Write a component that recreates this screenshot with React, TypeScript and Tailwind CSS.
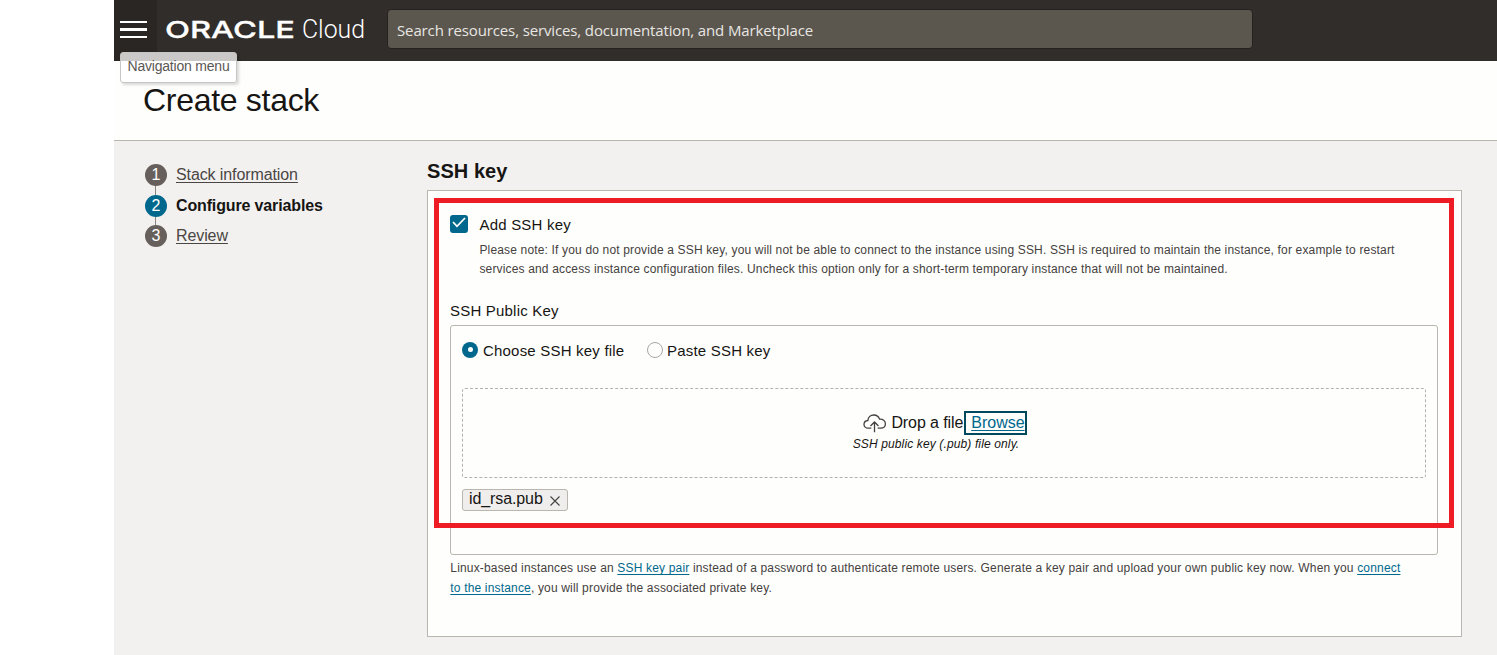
import React from "react";

function Header() {
  return (
    <header className="flex h-[61px] bg-[#312d2a]">
      <button aria-label="Menu" className="flex h-[61px] w-[43px] flex-col items-start gap-[5px] bg-[#2a2623] pl-1.5 pt-[21px]">
        <span className="h-0.5 w-[27px] bg-white" />
        <span className="h-[3px] w-[27px] bg-white" />
        <span className="h-0.5 w-[27px] bg-white" />
      </button>
      <svg width="230" height="61" viewBox="0 0 230 61" fill="#fff">
        <text x="8" y="38" fontFamily="Inter" fontWeight="500" fontSize="23.4" stroke="#fff" strokeWidth="0.3" textLength="130" lengthAdjust="spacingAndGlyphs">ORACLE</text>
        <text x="145" y="38" fontFamily="Roboto" fontWeight="300" fontSize="25" textLength="63" lengthAdjust="spacingAndGlyphs">Cloud</text>
      </svg>
      <div className="mt-[9px] flex h-10 w-[866px] items-center rounded border border-[#25211e] bg-[#5b564e] pl-[9px] font-['Open_Sans',sans-serif] text-[15px] tracking-[-0.13px] text-[#e8e6e3]">
        <span className="whitespace-nowrap pt-0.5">Search resources, services, documentation, and Marketplace</span>
      </div>
    </header>
  );
}

function Step({ n, label, active }: { n: number; label: string; active?: boolean }) {
  return (
    <li className="flex h-[22px] items-center gap-[9px]">
      <span className={active ? "flex size-[22px] items-center justify-center rounded-full bg-[#00688c] text-base text-white" : "flex size-[22px] items-center justify-center rounded-full bg-[#665f5b] text-base text-white"}>{n}</span>
      <span className={active ? "font-bold tracking-[-0.14px] text-[#161513]" : "tracking-[-0.1px] text-[#4a4643] underline decoration-1 underline-offset-2"}>{label}</span>
    </li>
  );
}

function Connector() {
  return <li aria-hidden className="ml-[10px] h-[8.5px] w-px bg-[#8b8580]" />;
}

function KeySource() {
  return (
    <div className="mt-[5px] h-[230px] rounded-[3px] border border-[#bab5ae] px-[11px] pt-[15px]">
      <div className="flex h-[18px] items-center text-[15px] tracking-[0.2px]">
        <span className="-mt-px flex size-4 items-center justify-center rounded-full bg-[#00688c]">
          <span className="size-[5px] rounded-full bg-white" />
        </span>
        <span className="ml-[5px] w-[164px] pt-0.5">Choose SSH key file</span>
        <span className="-mt-px size-4 rounded-full border border-[#aaa6a2]" />
        <span className="ml-1 pt-0.5">Paste SSH key</span>
      </div>
      <div className="mt-[29px] flex h-[90px] flex-col items-center rounded-[3px] border border-dashed border-[#b6b1ab] pt-[22px]">
        <div className="ml-0.5 flex h-6 items-center text-base">
          <svg width="24" height="20" viewBox="0 0 24 20" fill="none" stroke="#45413e" strokeWidth="1.3" className="mr-1 mt-0.5">
            <path d="M8.3 14.2H5.2C2.7 14.2 1 12.6 1 10.4C1 8.2 2.6 6.7 4.9 6.5C5 3.3 7.6 1 10.8 1C13.5 1 15.7 2.6 16.5 5.1C19.8 4.7 22.4 6.8 22.4 9.7C22.4 12.4 20.4 14.2 17.6 14.2H14.7M11.5 18.3V8M7.5 12L11.5 8L15.5 12" />
          </svg>
          <span className="tracking-[-0.1px]">Drop a file</span>
          <span className="ml-px flex h-6 items-center border-2 border-[#00485c] pl-[5px] text-[#00688c]">
            <span className="underline decoration-1 underline-offset-2">Browse</span>
          </span>
        </div>
        <span className="mt-px mr-4 text-xs italic tracking-[0.13px]">SSH public key (.pub) file only.</span>
      </div>
      <div className="mt-[11px] flex h-[22px] w-[106px] items-center rounded-[3px] border border-[#bab5ae] bg-[#f0eeed] pl-1.5 text-base">
        <span className="-mt-[3px] tracking-[-0.1px]">id_rsa.pub</span>
        <svg width="10" height="10" viewBox="0 0 10 10" stroke="#45413e" strokeWidth="1.1" className="ml-[7px] mt-px">
          <path d="M.5 .5L9.5 9.5M9.5 .5L.5 9.5" />
        </svg>
      </div>
    </div>
  );
}

export default function App() {
  return (
    <div className="h-[655px] w-[1497px] overflow-hidden bg-white font-['Liberation_Sans',Arial,sans-serif] text-[#161513]">
      <div className="relative ml-[114px] h-full bg-[#f3f1f0]">
        <Header />
        <div className="absolute left-1.5 top-[52px] flex h-[31px] w-[117px] items-center justify-center rounded-[3px] border border-[#c8c6c4] bg-linear-to-b from-[#cbc9c8] from-[8px] to-white to-[8px] pb-[3px] text-sm tracking-[-0.2px] text-[#5b5754] shadow-[2px_2px_3px_rgba(0,0,0,0.15)]">
          Navigation menu
        </div>
        <div className="h-20 border-b border-[#bab5ae] bg-[#fefefc] pl-[29px] pt-[21px]">
          <h1 className="text-[32px] leading-9 tracking-[-0.3px]">Create stack</h1>
        </div>
        <div className="flex">
          <ul className="w-[313px] pl-[31px] pt-[23px] text-base leading-[22px]">
            <Step n={1} label="Stack information" />
            <Connector />
            <Step n={2} label="Configure variables" active />
            <Connector />
            <Step n={3} label="Review" />
          </ul>
          <main className="w-[1035px] pt-[18px]">
            <h2 className="h-[31px] text-xl font-bold leading-6 tracking-[0.05px]">SSH key</h2>
            <section className="relative h-[447px] border border-[#bab5ae] bg-[#fefefc] pl-[22px] pr-[23px] pt-6">
              <div className="pointer-events-none absolute left-1.5 top-[7px] h-[330px] w-[1020px] border-[5px] border-[#ee1c25]" />
              <div className="flex h-[18px] items-center">
                <span className="flex size-[18px] items-center justify-center rounded-[3px] bg-[#00688c]">
                  <svg width="14" height="11" viewBox="0 0 14 11" fill="none" stroke="#fff" strokeWidth="1.8" className="-mt-[3px]"><path d="M1 5L5 9.3L13 1" /></svg>
                </span>
                <span className="ml-[11.5px] pt-0.5 text-[15px] tracking-[0.2px]">Add SSH key</span>
              </div>
              <p className="ml-[29.4px] mt-2 whitespace-nowrap text-xs leading-[19px] tracking-[0.163px] text-[#45413e]">
                Please note: If you do not provide a SSH key, you will not be able to connect to the instance using SSH. SSH is required to maintain the instance, for example to restart
                <br />
                services and access instance configuration files. Uncheck this option only for a short-term temporary instance that will not be maintained.
              </p>
              <div className="mt-[23px] h-[18px] text-[15px] leading-[18px] tracking-[0.2px]">SSH Public Key</div>
              <KeySource />
              <p className="ml-[0.3px] mt-[3px] whitespace-nowrap text-xs leading-5 tracking-[0.17px] text-[#45413e]">
                Linux-based instances use an <a className="text-[#00688c] underline underline-offset-2">SSH key pair</a> instead of a password to authenticate remote users. Generate a key pair and upload your own public key now. When you <a className="text-[#00688c] underline underline-offset-2">connect</a>
                <br />
                <a className="text-[#00688c] underline underline-offset-2">to the instance</a>, you will provide the associated private key.
              </p>
            </section>
          </main>
        </div>
      </div>
    </div>
  );
}
